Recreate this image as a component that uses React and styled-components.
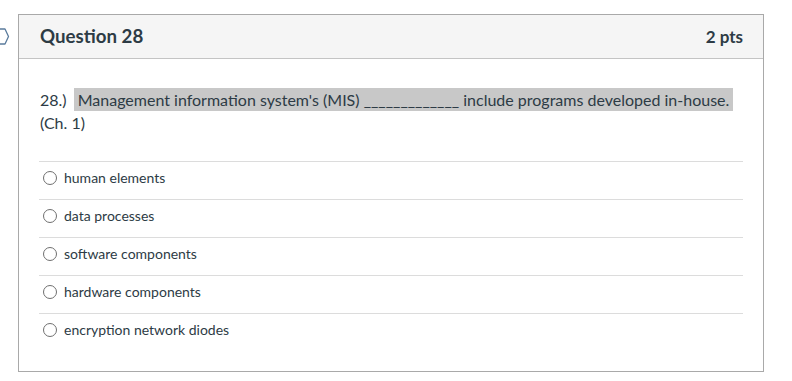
import React from "react";
import styled, { createGlobalStyle } from "styled-components";

const Global = createGlobalStyle`
  html, body { margin: 0; padding: 0; background: #fff; }
  body { font-family: Lato, "Noto Sans", sans-serif; color: #2d3b45; }
`;

const Page = styled.div`
  display: flex;
  align-items: flex-start;
  padding-top: 14px;
`;

const FlagColumn = styled.div`
  width: 18px;
  flex: none;
  padding-top: 14px;
  display: flex;
`;

const Card = styled.section`
  width: 746px;
  box-sizing: border-box;
  border: 1px solid #a9a9a9;
  background: #fff;
`;

const Header = styled.header`
  height: 44px;
  box-sizing: border-box;
  background: #f5f5f5;
  border-bottom: 1px solid #c4c4c4;
  display: flex;
  align-items: center;
  justify-content: space-between;
  padding: 0 20px 0 21px;
`;

const Title = styled.h2`
  margin: 0;
  font-size: 18.7px;
  font-weight: 700;
  color: #2d3b45;
  line-height: 1;
`;

const Points = styled.span`
  font-size: 17px;
  font-weight: 700;
  color: #2d3b45;
`;

const Body = styled.div`
  padding: 29px 20px 20px 20px;
`;

const QuestionText = styled.p`
  margin: 0 0 27px 0;
  font-size: 16px;
  line-height: 23px;
  color: #2d3b45;
  padding-left: 1px;
`;

const Highlight = styled.span`
  background: #c8c8c8;
  padding: 2px 4px;
  margin-left: 3px;
`;

const Answers = styled.div`
  display: flex;
  flex-direction: column;
`;

const AnswerRow = styled.label`
  display: flex;
  align-items: center;
  gap: 7px;
  border-top: 1px solid #dcdcdc;
  padding: 7px 0 13px 4px;
  font-size: 14px;
  line-height: 17px;
  color: #2d3b45;
`;

const Radio = styled.span`
  width: 14px;
  height: 14px;
  box-sizing: border-box;
  border: 1px solid #6f6f6f;
  border-radius: 50%;
  flex: none;
  background: #fff;
`;

const answers = [
  "human elements",
  "data processes",
  "software components",
  "hardware components",
  "encryption network diodes",
];

export default function App() {
  return (
    <>
      <Global />
      <Page>
        <FlagColumn>
          <svg width="10" height="17" viewBox="0 0 10 17" aria-hidden="true">
            <polyline
              points="0,1 5,1 8.5,8.5 5,16 0,16"
              fill="none"
              stroke="#5a7b9c"
              strokeWidth="1.3"
              strokeLinejoin="round"
            />
          </svg>
        </FlagColumn>
        <Card>
          <Header>
            <Title>Question 28</Title>
            <Points>2 pts</Points>
          </Header>
          <Body>
            <QuestionText>
              28.) <Highlight>Management information system's (MIS) _____________ include programs developed in-house.</Highlight>
              <br />
              (Ch. 1)
            </QuestionText>
            <Answers>
              {answers.map((a) => (
                <AnswerRow key={a}>
                  <Radio />
                  {a}
                </AnswerRow>
              ))}
            </Answers>
          </Body>
        </Card>
      </Page>
    </>
  );
}
